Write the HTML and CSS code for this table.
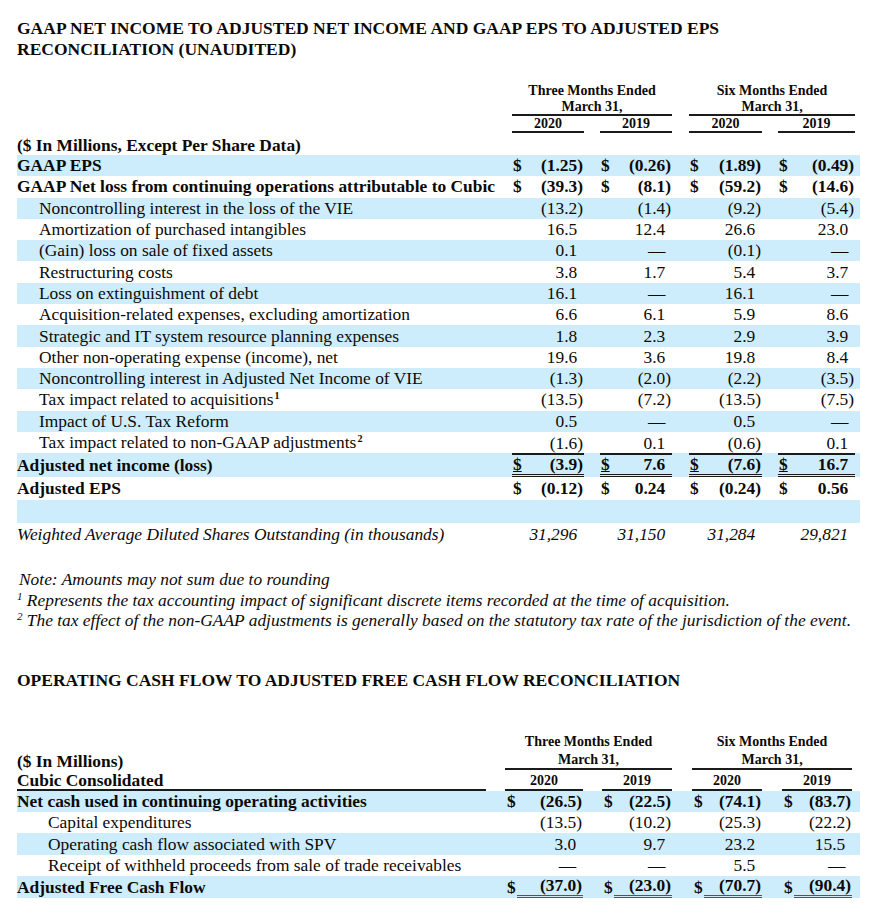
FILE: index.html
```html
<!DOCTYPE html>
<html lang="en">
<head>
<meta charset="utf-8">
<title>Reconciliation</title>
<link rel="stylesheet" href="styles.css">
</head>
<body>
<div class="page">
  <h1 class="title">GAAP NET INCOME TO ADJUSTED NET INCOME AND GAAP EPS TO ADJUSTED EPS<br>RECONCILIATION (UNAUDITED)</h1>

  <table class="fin fin1">
    <colgroup>
      <col class="c-lbl1"><col class="c-d"><col class="c-v1a"><col class="c-g16">
      <col class="c-d"><col class="c-v60"><col class="c-g17"><col class="c-d"><col class="c-v61">
      <col class="c-g16"><col class="c-d"><col class="c-v65"><col class="c-pad5">
    </colgroup>
    <tr class="h-a">
      <td></td><td colspan="5" class="hd">Three Months Ended</td><td></td><td colspan="5" class="hd">Six Months Ended</td><td></td>
    </tr>
    <tr class="h-b">
      <td></td><td colspan="5" class="hd ul">March 31,</td><td></td><td colspan="5" class="hd ul">March 31,</td><td></td>
    </tr>
    <tr class="h-c">
      <td></td><td colspan="2" class="hd ul">2020</td><td></td><td colspan="2" class="hd ul">2019</td><td></td><td colspan="2" class="hd ul">2020</td><td></td><td colspan="2" class="hd ul">2019</td><td></td>
    </tr>
    <tr class="h-d">
      <td class="lbl b" colspan="13">($ In Millions, Except Per Share Data)</td>
    </tr>
    <tr class="r band b">
      <td class="lbl">GAAP EPS</td><td class="d">$</td><td class="v">(1.25)</td><td></td><td class="d">$</td><td class="v">(0.26)</td><td></td><td class="d">$</td><td class="v">(1.89)</td><td></td><td class="d">$</td><td class="v">(0.49)</td><td></td>
    </tr>
    <tr class="r b">
      <td class="lbl">GAAP Net loss from continuing operations attributable to Cubic</td><td class="d">$</td><td class="v">(39.3)</td><td></td><td class="d">$</td><td class="v">(8.1)</td><td></td><td class="d">$</td><td class="v">(59.2)</td><td></td><td class="d">$</td><td class="v">(14.6)</td><td></td>
    </tr>
    <tr class="r band">
      <td class="lbl ind">Noncontrolling interest in the loss of the VIE</td><td></td><td class="v">(13.2)</td><td></td><td></td><td class="v">(1.4)</td><td></td><td></td><td class="v">(9.2)</td><td></td><td></td><td class="v">(5.4)</td><td></td>
    </tr>
    <tr class="r">
      <td class="lbl ind">Amortization of purchased intangibles</td><td></td><td class="v pos">16.5</td><td></td><td></td><td class="v pos">12.4</td><td></td><td></td><td class="v pos">26.6</td><td></td><td></td><td class="v pos">23.0</td><td></td>
    </tr>
    <tr class="r band">
      <td class="lbl ind">(Gain) loss on sale of fixed assets</td><td></td><td class="v pos">0.1</td><td></td><td></td><td class="v pos">—</td><td></td><td></td><td class="v">(0.1)</td><td></td><td></td><td class="v pos">—</td><td></td>
    </tr>
    <tr class="r">
      <td class="lbl ind">Restructuring costs</td><td></td><td class="v pos">3.8</td><td></td><td></td><td class="v pos">1.7</td><td></td><td></td><td class="v pos">5.4</td><td></td><td></td><td class="v pos">3.7</td><td></td>
    </tr>
    <tr class="r band">
      <td class="lbl ind">Loss on extinguishment of debt</td><td></td><td class="v pos">16.1</td><td></td><td></td><td class="v pos">—</td><td></td><td></td><td class="v pos">16.1</td><td></td><td></td><td class="v pos">—</td><td></td>
    </tr>
    <tr class="r">
      <td class="lbl ind">Acquisition-related expenses, excluding amortization</td><td></td><td class="v pos">6.6</td><td></td><td></td><td class="v pos">6.1</td><td></td><td></td><td class="v pos">5.9</td><td></td><td></td><td class="v pos">8.6</td><td></td>
    </tr>
    <tr class="r band">
      <td class="lbl ind">Strategic and IT system resource planning expenses</td><td></td><td class="v pos">1.8</td><td></td><td></td><td class="v pos">2.3</td><td></td><td></td><td class="v pos">2.9</td><td></td><td></td><td class="v pos">3.9</td><td></td>
    </tr>
    <tr class="r">
      <td class="lbl ind">Other non-operating expense (income), net</td><td></td><td class="v pos">19.6</td><td></td><td></td><td class="v pos">3.6</td><td></td><td></td><td class="v pos">19.8</td><td></td><td></td><td class="v pos">8.4</td><td></td>
    </tr>
    <tr class="r band">
      <td class="lbl ind">Noncontrolling interest in Adjusted Net Income of VIE</td><td></td><td class="v">(1.3)</td><td></td><td></td><td class="v">(2.0)</td><td></td><td></td><td class="v">(2.2)</td><td></td><td></td><td class="v">(3.5)</td><td></td>
    </tr>
    <tr class="r">
      <td class="lbl ind">Tax impact related to acquisitions<sup class="fn">1</sup></td><td></td><td class="v">(13.5)</td><td></td><td></td><td class="v">(7.2)</td><td></td><td></td><td class="v">(13.5)</td><td></td><td></td><td class="v">(7.5)</td><td></td>
    </tr>
    <tr class="r band">
      <td class="lbl ind">Impact of U.S. Tax Reform</td><td></td><td class="v pos">0.5</td><td></td><td></td><td class="v pos">—</td><td></td><td></td><td class="v pos">0.5</td><td></td><td></td><td class="v pos">—</td><td></td>
    </tr>
    <tr class="r">
      <td class="lbl ind">Tax impact related to non-GAAP adjustments<sup class="fn">2</sup></td><td></td><td class="v low">(1.6)</td><td></td><td></td><td class="v pos low">0.1</td><td></td><td></td><td class="v low">(0.6)</td><td></td><td></td><td class="v pos low">0.1</td><td></td>
    </tr>
    <tr class="r2 band b">
      <td class="lbl">Adjusted net income (loss)</td><td class="d tot"><span class="us">$</span></td><td class="v tot">(3.9)</td><td></td><td class="d tot"><span class="us">$</span></td><td class="v pos tot">7.6</td><td></td><td class="d tot"><span class="us">$</span></td><td class="v tot">(7.6)</td><td></td><td class="d tot"><span class="us">$</span></td><td class="v pos tot">16.7</td><td></td>
    </tr>
    <tr class="r2 b">
      <td class="lbl">Adjusted EPS</td><td class="d">$</td><td class="v">(0.12)</td><td></td><td class="d">$</td><td class="v pos">0.24</td><td></td><td class="d">$</td><td class="v">(0.24)</td><td></td><td class="d">$</td><td class="v pos">0.56</td><td></td>
    </tr>
    <tr class="r2 band">
      <td colspan="13"></td>
    </tr>
    <tr class="r2 it">
      <td class="lbl">Weighted Average Diluted Shares Outstanding (in thousands)</td><td></td><td class="v pos">31,296</td><td></td><td></td><td class="v pos">31,150</td><td></td><td></td><td class="v pos">31,284</td><td></td><td></td><td class="v pos">29,821</td><td></td>
    </tr>
  </table>

  <div class="notes">
    <p class="note-first">Note: Amounts may not sum due to rounding</p>
    <p><sup class="nfn">1</sup> Represents the tax accounting impact of significant discrete items recorded at the time of acquisition.</p>
    <p><sup class="nfn">2</sup> The tax effect of the non-GAAP adjustments is generally based on the statutory tax rate of the jurisdiction of the event.</p>
  </div>

  <h2 class="title title2">OPERATING CASH FLOW TO ADJUSTED FREE CASH FLOW RECONCILIATION</h2>

  <table class="fin fin2">
    <colgroup>
      <col class="c-lbl2"><col class="c-sp19"><col class="c-d"><col class="c-v66"><col class="c-g19">
      <col class="c-d"><col class="c-v58"><col class="c-g20"><col class="c-d"><col class="c-v58">
      <col class="c-g20"><col class="c-d"><col class="c-v58"><col class="c-pad8">
    </colgroup>
    <tr class="h2-a">
      <td colspan="2"></td><td colspan="5" class="hd">Three Months Ended</td><td></td><td colspan="5" class="hd">Six Months Ended</td><td></td>
    </tr>
    <tr class="h2-b">
      <td class="lbl b">($ In Millions)</td><td></td><td colspan="5" class="hd ul">March 31,</td><td></td><td colspan="5" class="hd ul">March 31,</td><td></td>
    </tr>
    <tr class="h2-c">
      <td class="lbl b ul">Cubic Consolidated</td><td></td><td colspan="2" class="hd ul">2020</td><td></td><td colspan="2" class="hd ul">2019</td><td></td><td colspan="2" class="hd ul">2020</td><td></td><td colspan="2" class="hd ul">2019</td><td></td>
    </tr>
    <tr class="q band b">
      <td class="lbl">Net cash used in continuing operating activities</td><td></td><td class="d d2">$</td><td class="v">(26.5)</td><td></td><td class="d d2">$</td><td class="v">(22.5)</td><td></td><td class="d d2">$</td><td class="v">(74.1)</td><td></td><td class="d d2">$</td><td class="v">(83.7)</td><td></td>
    </tr>
    <tr class="q">
      <td class="lbl ind2">Capital expenditures</td><td></td><td></td><td class="v">(13.5)</td><td></td><td></td><td class="v">(10.2)</td><td></td><td></td><td class="v">(25.3)</td><td></td><td></td><td class="v">(22.2)</td><td></td>
    </tr>
    <tr class="q band">
      <td class="lbl ind2">Operating cash flow associated with SPV</td><td></td><td></td><td class="v pos">3.0</td><td></td><td></td><td class="v pos">9.7</td><td></td><td></td><td class="v pos">23.2</td><td></td><td></td><td class="v pos">15.5</td><td></td>
    </tr>
    <tr class="q">
      <td class="lbl ind2">Receipt of withheld proceeds from sale of trade receivables</td><td></td><td></td><td class="v pos">—</td><td></td><td></td><td class="v pos">—</td><td></td><td></td><td class="v pos">5.5</td><td></td><td></td><td class="v pos">—</td><td></td>
    </tr>
    <tr class="q band b">
      <td class="lbl">Adjusted Free Cash Flow</td><td></td><td class="d d2">$</td><td class="v tot2">(37.0)</td><td></td><td class="d d2">$</td><td class="v tot2">(23.0)</td><td></td><td class="d d2">$</td><td class="v tot2">(70.7)</td><td></td><td class="d d2">$</td><td class="v tot2">(90.4)</td><td></td>
    </tr>
  </table>
</div>
</body>
</html>
```

FILE: styles.css
```css
html, body {
  margin: 0;
  padding: 0;
  background: #ffffff;
}

body {
  font-family: "Liberation Serif", "Times New Roman", serif;
  color: #0c0a08;
}

.page {
  padding: 18px 22px 0 17px;
  width: 843px;
}

.title {
  margin: 0;
  font-size: 17.5px;
  line-height: 21px;
  font-weight: bold;
  letter-spacing: 0;
}

.title2 {
  margin-top: 39px;
}

.fin {
  table-layout: fixed;
  width: 843px;
  border-collapse: separate;
  border-spacing: 0;
  font-size: 17.4px;
}

.fin td {
  padding: 0;
  box-sizing: border-box;
  white-space: nowrap;
  vertical-align: middle;
  line-height: 19px;
}

.fin1 { margin-top: 22px; }
.fin2 { margin-top: 41px; }

/* column widths, table 1 */
.c-lbl1 { width: 495px; }
.c-d { width: 12px; }
.c-v1a { width: 60px; }
.c-v60 { width: 60px; }
.c-v61 { width: 61px; }
.c-v65 { width: 65px; }
.c-g16 { width: 16px; }
.c-g17 { width: 17px; }
.c-pad5 { width: 5px; }

/* column widths, table 2 */
.c-lbl2 { width: 469px; }
.c-sp19 { width: 19px; }
.c-v66 { width: 66px; }
.c-v58 { width: 58px; }
.c-g19 { width: 19px; }
.c-g20 { width: 20px; }
.c-pad8 { width: 8px; }

.hd {
  text-align: center;
  font-weight: bold;
  font-size: 14px;
}

.h-a td { height: 17px; line-height: 17px; }
.h-b td { height: 17px; line-height: 15px; }
.h-c td { height: 17px; line-height: 15px; }
.h-d td { height: 22px; line-height: 20px; vertical-align: bottom; }

.h2-a td { height: 20px; line-height: 20px; }
.h2-b td { height: 18px; line-height: 16px; vertical-align: bottom; }
.h2-b td.lbl { line-height: 18px; }
.h2-c td { height: 21px; line-height: 17px; vertical-align: bottom; }
.h2-c td.lbl { line-height: 18px; }

.ul { border-bottom: 2px solid #1b1b1b; }

.lbl { text-align: left; }
.ind { padding-left: 22px !important; }
.ind2 { padding-left: 31px !important; }

.b td, td.b { font-weight: bold; }
.it td { font-style: italic; }

.r td { height: 21.3px; }
.r2 td { height: 23px; }
.q td { height: 21.4px; }
.q:first-of-type td { height: 22px; }

.band td { background: #cdedfd; }

.d { text-align: left; padding-left: 1px !important; }
.d2 { padding-left: 2px !important; }

.v {
  text-align: right;
  padding-right: 1px !important;
}

.pos::after {
  content: ")";
  visibility: hidden;
}

.low { vertical-align: bottom !important; }

.tot {
  border-top: 2px solid #1b1b1b;
  border-bottom: 3px double #1b1b1b;
}

.us { text-decoration: underline; text-underline-offset: 1px; }

.tot2 {
  border-bottom: 3px double #555555;
  background-image: linear-gradient(#1b1b1b, #1b1b1b);
  background-repeat: no-repeat;
  background-size: 100% 1px;
  background-position: 0 0;
}

.fn {
  font-size: 10px;
  line-height: 0;
  font-weight: bold;
  vertical-align: 6px;
  margin-left: 1px;
}

.notes {
  margin-top: 23px;
  font-style: italic;
  font-size: 17.4px;
  line-height: 20.5px;
}

.notes p { margin: 0; }
.note-first { padding-left: 2px; }

.nfn {
  font-size: 11px;
  line-height: 0;
  vertical-align: 6px;
}
```
